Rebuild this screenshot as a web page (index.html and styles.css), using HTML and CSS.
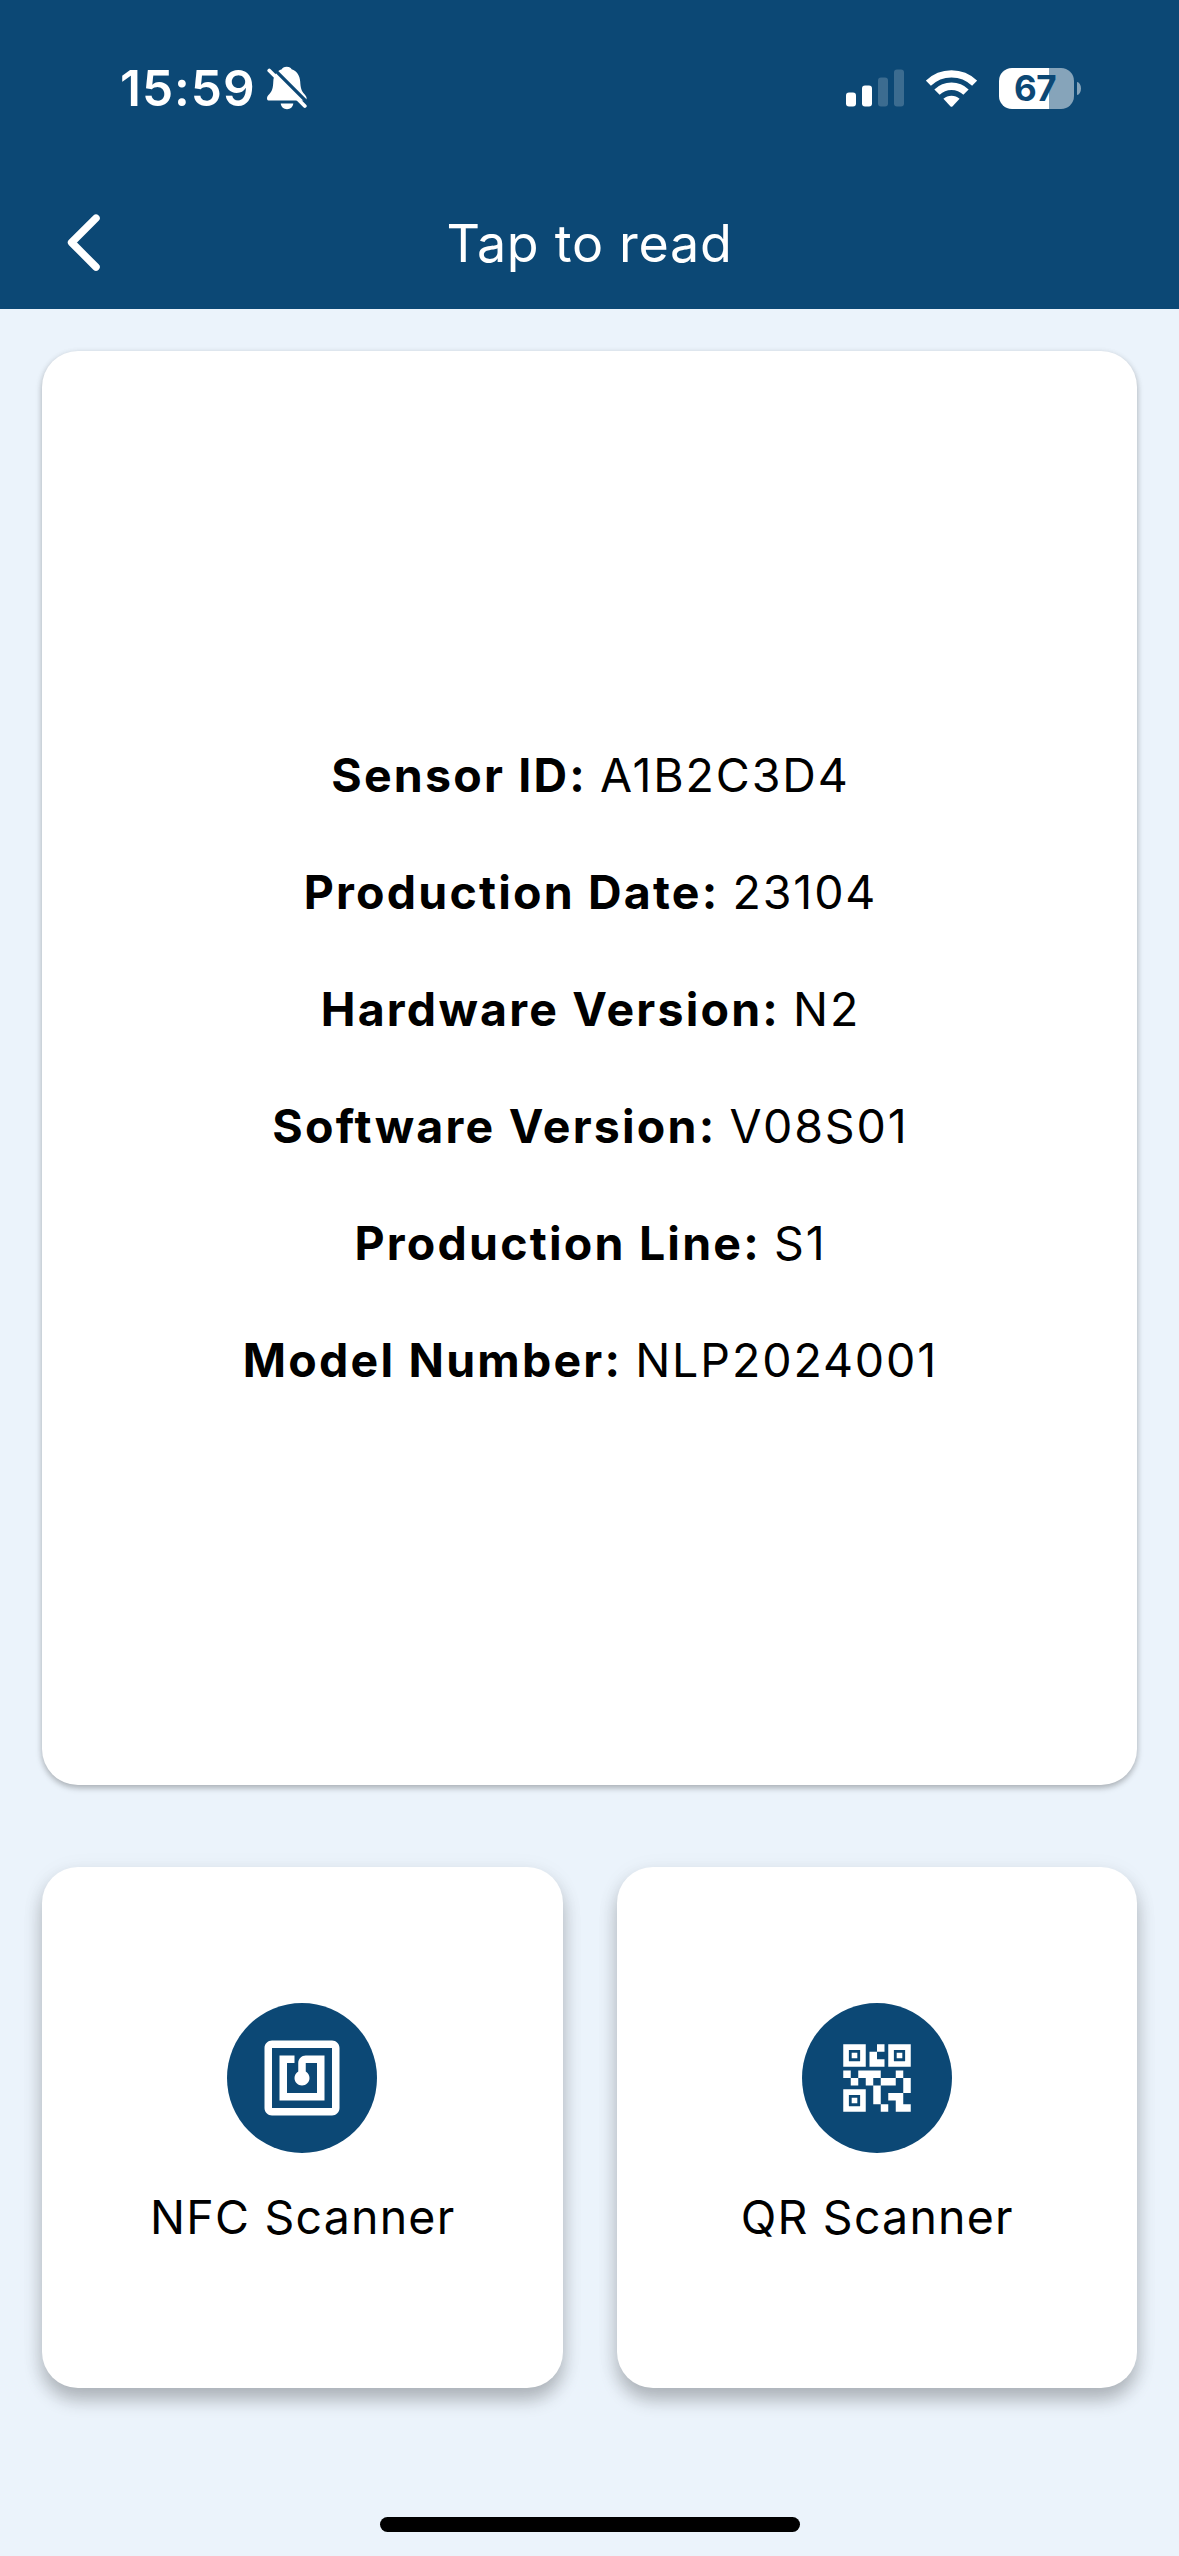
FILE: index.html
```
<!DOCTYPE html>
<html lang="en">
<head>
<meta charset="utf-8">
<title>Tap to read</title>
<link rel="stylesheet" href="styles.css">
</head>
<body>
<header class="header">
  <div class="status">
    <div class="status-left">
      <span class="clock">15:59</span>
      <svg class="bell" width="42" height="46" viewBox="0 0 42 46">
        <path fill="#fff" d="M19.7.7C22.5.7 24 1.8 24.6 3.2C29.8 5 32.8 9.5 33.2 15.5C33.6 22 34.3 24.8 37.5 28.3C39 30 39.6 31 39.6 32.4C39.6 33.9 38.6 34.6 37 34.6H2.6C1 34.6 0 33.9 0 32.4C0 31 .7 29.8 2.2 28.3C5.3 24.8 6 22 6.3 15.5C6.6 9.5 9.6 5 14.8 3.2C15.4 1.8 17 .7 19.7.7z"/>
        <path fill="#fff" d="M13.7 37.6h12.6c-.4 3.4-2.9 5.7-6.3 5.7s-5.9-2.3-6.3-5.7z"/>
        <path stroke="#0c4875" stroke-width="3.2" d="M3.8 -.2L43 39"/>
        <path stroke="#fff" stroke-width="3.8" stroke-linecap="round" d="M2.3 4.5L37.8 40"/>
      </svg>
    </div>
    <div class="status-right">
      <svg width="58" height="38" viewBox="0 0 58 38" fill="#fff">
        <rect y="23.5" width="10" height="14" rx="3"/>
        <rect x="16" y="16.5" width="10" height="21" rx="3"/>
        <rect x="32" y="8.5" width="10" height="29" rx="3" opacity=".2"/>
        <rect x="48" y=".5" width="10" height="37" rx="3" opacity=".2"/>
      </svg>
      <svg class="wifi" width="51" height="39" viewBox="0 0 51 39">
        <path fill="none" stroke="#fff" stroke-width="7.2" d="M2.4 14.2A33.2 33.2 0 0 1 48.6 14.2"/>
        <path fill="none" stroke="#fff" stroke-width="7.6" d="M11 23.1A20.8 20.8 0 0 1 40 23.1"/>
        <path fill="#fff" d="M17.4 29.8A12 12 0 0 1 33.6 29.8L26.4 37.4Q25.5 38.2 24.6 37.4z"/>
      </svg>
      <div class="battery">67</div>
      <div class="battery-tip"></div>
    </div>
  </div>
  <nav class="nav">
    <svg class="back" width="40" height="65" viewBox="0 0 40 65" fill="none" stroke="#fff" stroke-width="7.5" stroke-linecap="round" stroke-linejoin="round">
      <path d="M33 8.2L8.6 32.5L33 57"/>
    </svg>
    <h1 class="title">Tap to read</h1>
    <span class="nav-end"></span>
  </nav>
</header>
<main class="content">
  <section class="details">
    <p class="row"><b>Sensor ID:</b> A1B2C3D4</p>
    <p class="row"><b>Production Date:</b> 23104</p>
    <p class="row"><b>Hardware Version:</b> N2</p>
    <p class="row"><b>Software Version:</b> V08S01</p>
    <p class="row"><b>Production Line:</b> S1</p>
    <p class="row"><b>Model Number:</b> NLP2024001</p>
  </section>
  <div class="actions">
    <div class="action">
      <div class="badge">
        <svg width="90" height="90" viewBox="0 0 24 24" fill="#fff"><path d="M20 2H4c-1.1 0-2 .9-2 2v16c0 1.1.9 2 2 2h16c1.1 0 2-.9 2-2V4c0-1.1-.9-2-2-2zm0 18H4V4h16v16zM18 6h-5c-1.1 0-2 .9-2 2v2.28c-.6.35-1 .98-1 1.72 0 1.1.9 2 2 2s2-.9 2-2c0-.74-.4-1.38-1-1.72V8h3v8H8V8h2V6H6v12h12V6z"/></svg>
      </div>
      <span class="label">NFC Scanner</span>
    </div>
    <div class="action">
      <div class="badge">
        <svg width="90" height="90" viewBox="0 0 24 24" fill="#fff"><path d="M15 21h-2v-2h2v2zm-2-7h-2v5h2v-5zm8-2h-2v4h2v-4zm-2-2h-2v2h2v-2zM7 12H5v2h2v-2zm-2-2H3v2h2v-2zm7-5h2V3h-2v2zm-7.5-.5v3h3v-3h-3zM9 9H3V3h6v6zm-4.5 7.5v3h3v-3h-3zM9 21H3v-6h6v6zm7.5-16.5v3h3v-3h-3zM21 9h-6V3h6v6zm-2 10v-3h-4v2h2v3h4v-2h-2zm-2-7h-4v2h4v-2zm-4-2H7v2h2v2h2v-2h2v-2zm1-1V7h-2V5h-2v4h4zM6.75 5.25h-1.5v1.5h1.5v-1.5zm0 12h-1.5v1.5h1.5v-1.5zm12-12h-1.5v1.5h1.5v-1.5z"/></svg>
      </div>
      <span class="label">QR Scanner</span>
    </div>
  </div>
</main>
<footer class="footer"><div class="home-bar"></div></footer>
</body>
</html>
```
FILE: styles.css
```
* { box-sizing: border-box; margin: 0; padding: 0; }

body {
  width: 1179px;
  height: 2556px;
  display: flex;
  flex-direction: column;
  background: #ebf3fb;
  color: #000;
  font-family: Inter, "Liberation Sans", sans-serif;
  overflow: hidden;
}

svg { display: block; flex: none; }

.header { height: 309px; background: #0c4875; color: #fff; }

.status {
  height: 176px;
  display: flex;
  justify-content: space-between;
  align-items: center;
  padding: 0 98px 0 120px;
}

.status-left, .status-right { display: flex; align-items: center; }

.clock {
  font-size: 49.5px;
  font-weight: 600;
  line-height: 60px;
  letter-spacing: 1px;
  width: 147px;
}

.bell { margin-top: 2px; }
.wifi { margin: 0 22px; }

.battery {
  width: 75px;
  height: 41px;
  border-radius: 13px;
  background: linear-gradient(90deg, #fff 50px, #86a4ba 50px);
  color: #0c4875;
  font-size: 35px;
  font-weight: 700;
  line-height: 41px;
  text-align: center;
  letter-spacing: -0.5px;
  padding-right: 3px;
}

.battery-tip {
  width: 4px;
  height: 13px;
  margin-left: 3px;
  border-radius: 0 4px 4px 0 / 0 6.5px 6.5px 0;
  background: #86a4ba;
}

.nav {
  height: 133px;
  display: flex;
  justify-content: space-between;
  align-items: center;
  padding: 0 63px;
}

.title {
  font-size: 52px;
  font-weight: 400;
  line-height: 64px;
  letter-spacing: 0.7px;
  padding-top: 2px;
}

.nav-end { width: 40px; }

.content { padding: 42px 42px 0; }

.details {
  height: 1434px;
  display: flex;
  flex-direction: column;
  justify-content: center;
  padding-left: 2px;
  background: #fff;
  border-radius: 36px;
  box-shadow: 0 3px 6px rgba(0, 0, 0, 0.26), 0 1px 7px rgba(0, 0, 0, 0.05);
}

.row {
  font-size: 46.5px;
  font-weight: 400;
  line-height: 117px;
  letter-spacing: 1.9px;
  text-align: center;
  word-spacing: -2px;
}

.row b { font-weight: 700; letter-spacing: 2.2px; word-spacing: 0; }

.actions {
  display: grid;
  grid-template-columns: 1fr 1fr;
  gap: 54px;
  margin-top: 82px;
}

.action {
  height: 521px;
  display: flex;
  flex-direction: column;
  align-items: center;
  padding-top: 136px;
  background: #fff;
  border-radius: 36px;
  box-shadow: 0 12px 18px rgba(0, 0, 0, 0.24), 0 4px 24px rgba(0, 0, 0, 0.06);
}

.badge {
  width: 150px;
  height: 150px;
  display: flex;
  align-items: center;
  justify-content: center;
  border-radius: 50%;
  background: #0c4875;
}

.label {
  margin-top: 34px;
  padding-left: 1px;
  font-size: 46.5px;
  font-weight: 400;
  line-height: 60px;
  letter-spacing: 1.2px;
}

.footer { display: flex; justify-content: center; margin-top: auto; padding-bottom: 24px; }
.home-bar { width: 420px; height: 15px; border-radius: 8px; background: #000; }
```
